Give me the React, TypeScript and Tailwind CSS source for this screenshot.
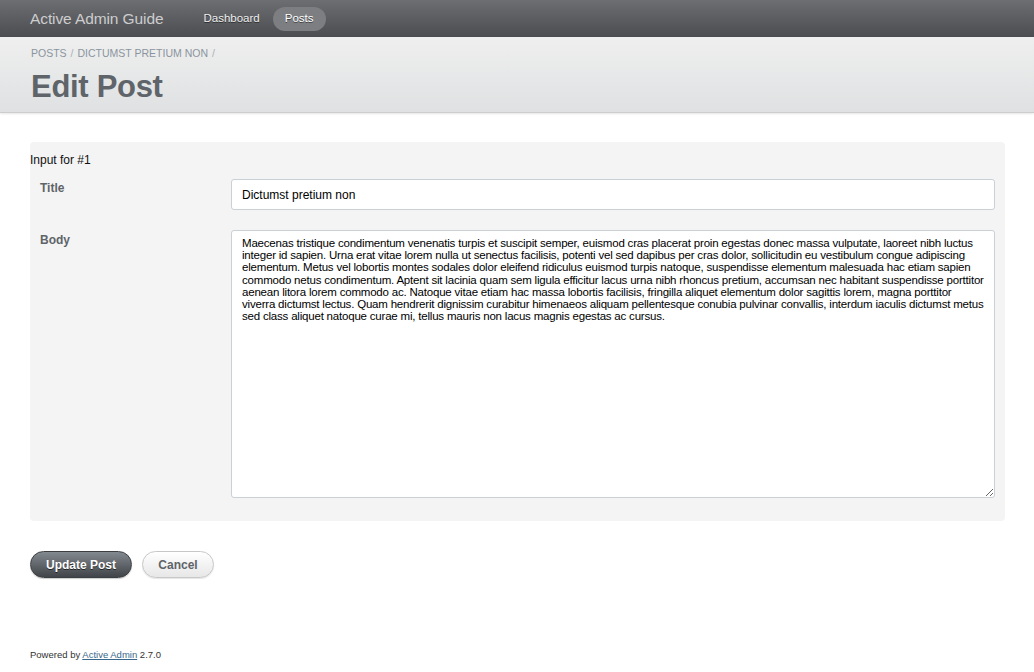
import React from 'react';

const bodyText =
  'Maecenas tristique condimentum venenatis turpis et suscipit semper, euismod cras placerat proin egestas donec massa vulputate, laoreet nibh luctus integer id sapien. Urna erat vitae lorem nulla ut senectus facilisis, potenti vel sed dapibus per cras dolor, sollicitudin eu vestibulum congue adipiscing elementum. Metus vel lobortis montes sodales dolor eleifend ridiculus euismod turpis natoque, suspendisse elementum malesuada hac etiam sapien commodo netus condimentum. Aptent sit lacinia quam sem ligula efficitur lacus urna nibh rhoncus pretium, accumsan nec habitant suspendisse porttitor aenean litora lorem commodo ac. Natoque vitae etiam hac massa lobortis facilisis, fringilla aliquet elementum dolor sagittis lorem, magna porttitor viverra dictumst lectus. Quam hendrerit dignissim curabitur himenaeos aliquam pellentesque conubia pulvinar convallis, interdum iaculis dictumst metus sed class aliquet natoque curae mi, tellus mauris non lacus magnis egestas ac cursus.';

export default function App() {
  return (
    <div className="min-h-[672px] bg-white font-['Liberation_Sans',Arial,sans-serif] text-[12px] text-[#323537]">
      {/* Header */}
      <div className="h-[37px] flex items-center px-[30px] bg-gradient-to-b from-[#6d6e72] to-[#4b4d51]">
        <h1 className="text-[15.5px] text-[#cdcdcd] tracking-[-0.1px] mr-[29px]">Active Admin Guide</h1>
        <nav className="flex items-center gap-[2px] text-[11.5px] text-[#eeeeee] [text-shadow:0_1px_0_rgba(0,0,0,0.5)]">
          <span className="px-[11px] h-[24px] flex items-center">Dashboard</span>
          <span className="px-[12px] h-[24px] flex items-center rounded-full bg-[#7c7e82] text-white">Posts</span>
        </nav>
      </div>

      {/* Title bar */}
      <div className="h-[76px] px-[31px] pt-[10px] bg-gradient-to-b from-[#efefef] to-[#dfe1e2] border-b border-[#cdcdcd] shadow-[0_1px_2px_rgba(0,0,0,0.1)]">
        <div className="text-[10.5px] text-[#8a949e] uppercase flex gap-[4px] h-[14px] items-center">
          <span>Posts</span>
          <span className="text-[#aab1b8]">/</span>
          <span>Dictumst pretium non</span>
          <span className="text-[#aab1b8]">/</span>
        </div>
        <h2 className="mt-[8px] text-[31px] font-bold text-[#5e6469] leading-[36px] tracking-[-0.3px]">Edit Post</h2>
      </div>

      {/* Main content */}
      <div className="pl-[30px] pr-[29px] pt-[29px]">
        <div className="h-[379px] bg-[#f4f4f4] rounded-[4px] pt-[11px] pb-[23px]">
          <div className="text-[12px] text-[#111] leading-[14px]">Input for #1</div>
          <div className="mt-[12px] flex px-[10px]">
            <label className="w-[191px] font-bold text-[#5e6469]">Title</label>
            <div className="flex-1 h-[31px] bg-white border border-[#c9d0d6] rounded-[3px] flex items-center px-[10px] text-black">
              Dictumst pretium non
            </div>
          </div>
          <div className="mt-[20px] flex px-[10px]">
            <label className="w-[191px] pt-[1px] font-bold text-[#5e6469]">Body</label>
            <textarea
              className="flex-1 h-[268px] bg-white border border-[#c9d0d6] rounded-[3px] px-[10px] pt-[6px] text-black text-[11.5px] tracking-[-0.2px] leading-[12.2px] outline-none resize"
              defaultValue={bodyText}
            />
          </div>
        </div>

        {/* Actions */}
        <div className="mt-[30px] flex gap-[10px]">
          <button className="h-[27px] w-[102px] rounded-full bg-gradient-to-b from-[#838a90] to-[#414549] border border-[#3c3f42] text-white font-bold text-[12px] [text-shadow:0_1px_0_rgba(0,0,0,0.6)] shadow-[0_1px_1px_rgba(0,0,0,0.2)]">
            Update Post
          </button>
          <button className="h-[27px] w-[72px] rounded-full bg-gradient-to-b from-white to-[#e7e7e7] border border-[#c7c7c7] text-[#5e6469] font-bold text-[12px] shadow-[0_1px_1px_rgba(0,0,0,0.1)]">
            Cancel
          </button>
        </div>

        {/* Footer */}
        <div className="mt-[71px] text-[9.5px] text-[#333] leading-[12px]">
          Powered by <span className="text-[#38678b] underline">Active Admin</span> 2.7.0
        </div>
      </div>
    </div>
  );
}
